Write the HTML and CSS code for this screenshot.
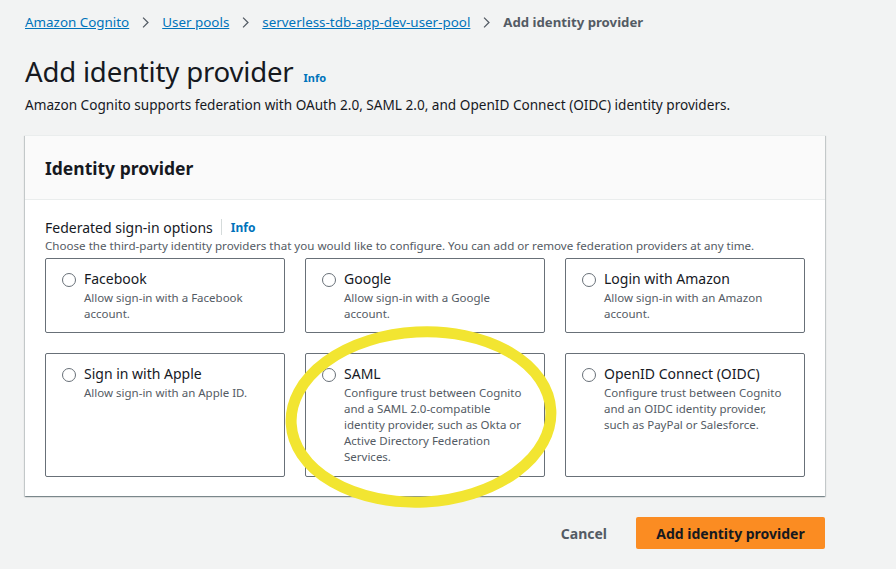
FILE: index.html
```html
<!DOCTYPE html>
<html>
<head>
<meta charset="utf-8">
<link rel="stylesheet" href="styles.css">
</head>
<body>
<div class="page">
  <nav class="crumbs">
    <a href="#">Amazon Cognito</a>
    <svg class="chev" viewBox="0 0 16 16"><path d="M5 2l6 6-6 6" fill="none" stroke="#545b64" stroke-width="1.6"/></svg>
    <a href="#">User pools</a>
    <svg class="chev" viewBox="0 0 16 16"><path d="M5 2l6 6-6 6" fill="none" stroke="#545b64" stroke-width="1.6"/></svg>
    <a href="#">serverless-tdb-app-dev-user-pool</a>
    <svg class="chev" viewBox="0 0 16 16"><path d="M5 2l6 6-6 6" fill="none" stroke="#545b64" stroke-width="1.6"/></svg>
    <span class="current">Add identity provider</span>
  </nav>
  <div class="head">
    <h1>Add identity provider</h1>
    <a class="info big" href="#">Info</a>
  </div>
  <p class="sub">Amazon Cognito supports federation with OAuth 2.0, SAML 2.0, and OpenID Connect (OIDC) identity providers.</p>

  <section class="card">
    <div class="card-head"><h2>Identity provider</h2></div>
    <div class="card-body">
      <div class="label-row"><span class="label">Federated sign-in options</span><span class="sep"></span><a class="info" href="#">Info</a></div>
      <div class="hint">Choose the third-party identity providers that you would like to configure. You can add or remove federation providers at any time.</div>
      <div class="grid">
        <div class="tile short"><span class="radio"></span><div><div class="t">Facebook</div><div class="d">Allow sign-in with a Facebook account.</div></div></div>
        <div class="tile short"><span class="radio"></span><div><div class="t">Google</div><div class="d">Allow sign-in with a Google account.</div></div></div>
        <div class="tile short"><span class="radio"></span><div><div class="t">Login with Amazon</div><div class="d">Allow sign-in with an Amazon account.</div></div></div>
        <div class="tile tall"><span class="radio"></span><div><div class="t">Sign in with Apple</div><div class="d">Allow sign-in with an Apple ID.</div></div></div>
        <div class="tile tall"><span class="radio"></span><div><div class="t">SAML</div><div class="d">Configure trust between Cognito and a SAML 2.0-compatible identity provider, such as Okta or Active Directory Federation Services.</div></div></div>
        <div class="tile tall"><span class="radio"></span><div><div class="t">OpenID Connect (OIDC)</div><div class="d">Configure trust between Cognito and an OIDC identity provider, such as PayPal or Salesforce.</div></div></div>
      </div>
    </div>
  </section>

  <div class="actions">
    <button class="cancel">Cancel</button>
    <button class="primary">Add identity provider</button>
  </div>
</div>
<svg class="circle" width="896" height="569" viewBox="0 0 896 569"><ellipse cx="421" cy="417" rx="130" ry="85" fill="none" stroke="#f2e531" stroke-width="11" transform="rotate(-3 421 417)"/></svg>
</body>
</html>
```
FILE: styles.css
```css
html, body { margin: 0; padding: 0; }
body {
  background: #f2f3f3;
  font-family: "Noto Sans", "Open Sans", sans-serif;
  color: #16191f;
  width: 896px;
  height: 569px;
  overflow: hidden;
  position: relative;
}
.page { padding: 11px 25px 0 25px; width: 800px; }
.crumbs { display: flex; align-items: center; font-size: 13.4px; line-height: 22px; height: 22px; }
.crumbs a { color: #0073bb; text-decoration: underline; }
.chev { width: 13px; height: 13px; margin: 0 10px 0 10px; }
.current { color: #545b64; font-weight: 700; font-size: 13.2px; }
.head { display: flex; align-items: baseline; margin-top: 21px; }
h1 { margin: 0; font-size: 27.6px; font-weight: 400; line-height: 34px; letter-spacing: -0.2px; }
.info { color: #0073bb; font-weight: 700; font-size: 12px; text-decoration: none; }
.info.big { font-size: 11px; margin-left: 10px; }
.sub { margin: 7px 0 0 0; font-size: 13.6px; line-height: 20px; color: #16191f; }
.card {
  margin-top: 20px;
  background: #fff;
  box-shadow: 0 1px 1px 0 rgba(0,28,36,0.3), 1px 1px 1px 0 rgba(0,28,36,0.15), -1px 1px 1px 0 rgba(0,28,36,0.15);
  height: 361px;
  border-top: 1px solid #eaeded;
  box-sizing: border-box;
}
.card-head { height: 64px; background: #fafafa; border-bottom: 1px solid #eaeded; box-sizing: border-box; padding: 0 20px; display: flex; align-items: center; }
h2 { margin: 0; font-size: 17.5px; font-weight: 700; line-height: 22px; }
.card-body { padding: 17px 20px 0 20px; }
.label-row { display: flex; align-items: center; height: 20px; }
.label { font-size: 14px; color: #16191f; }
.sep { width: 1px; height: 16px; background: #d5dbdb; margin: 0 9px 0 8px; }
.hint { font-size: 11.6px; color: #545b64; line-height: 16px; margin-top: 1px; }
.grid { display: grid; grid-template-columns: 240px 240px 240px; grid-template-rows: 75px 124px; column-gap: 20px; row-gap: 20px; margin-top: 4px; }
.tile { border: 1px solid #687078; border-radius: 2px; box-sizing: border-box; display: flex; align-items: flex-start; padding: 11px 16px 0 16px; }
.radio { width: 12px; height: 12px; border: 1.5px solid #687078; border-radius: 50%; flex: none; margin-top: 3px; margin-right: 8px; box-sizing: content-box; }
.t { font-size: 14px; line-height: 18px; color: #16191f; }
.d { font-size: 11.5px; line-height: 16px; color: #545b64; margin-top: 2px; }
.actions { display: flex; justify-content: flex-end; align-items: center; margin-top: 21px; }
button { font-family: inherit; font-weight: 700; font-size: 14px; border: none; cursor: pointer; }
.cancel { background: none; color: #545b64; padding: 0; margin-right: 29px; }
.primary { background: #fb8c22; color: #16191f; width: 189px; height: 32px; border-radius: 2px; padding: 0; }
.circle { position: absolute; left: 0; top: 0; pointer-events: none; }
```
